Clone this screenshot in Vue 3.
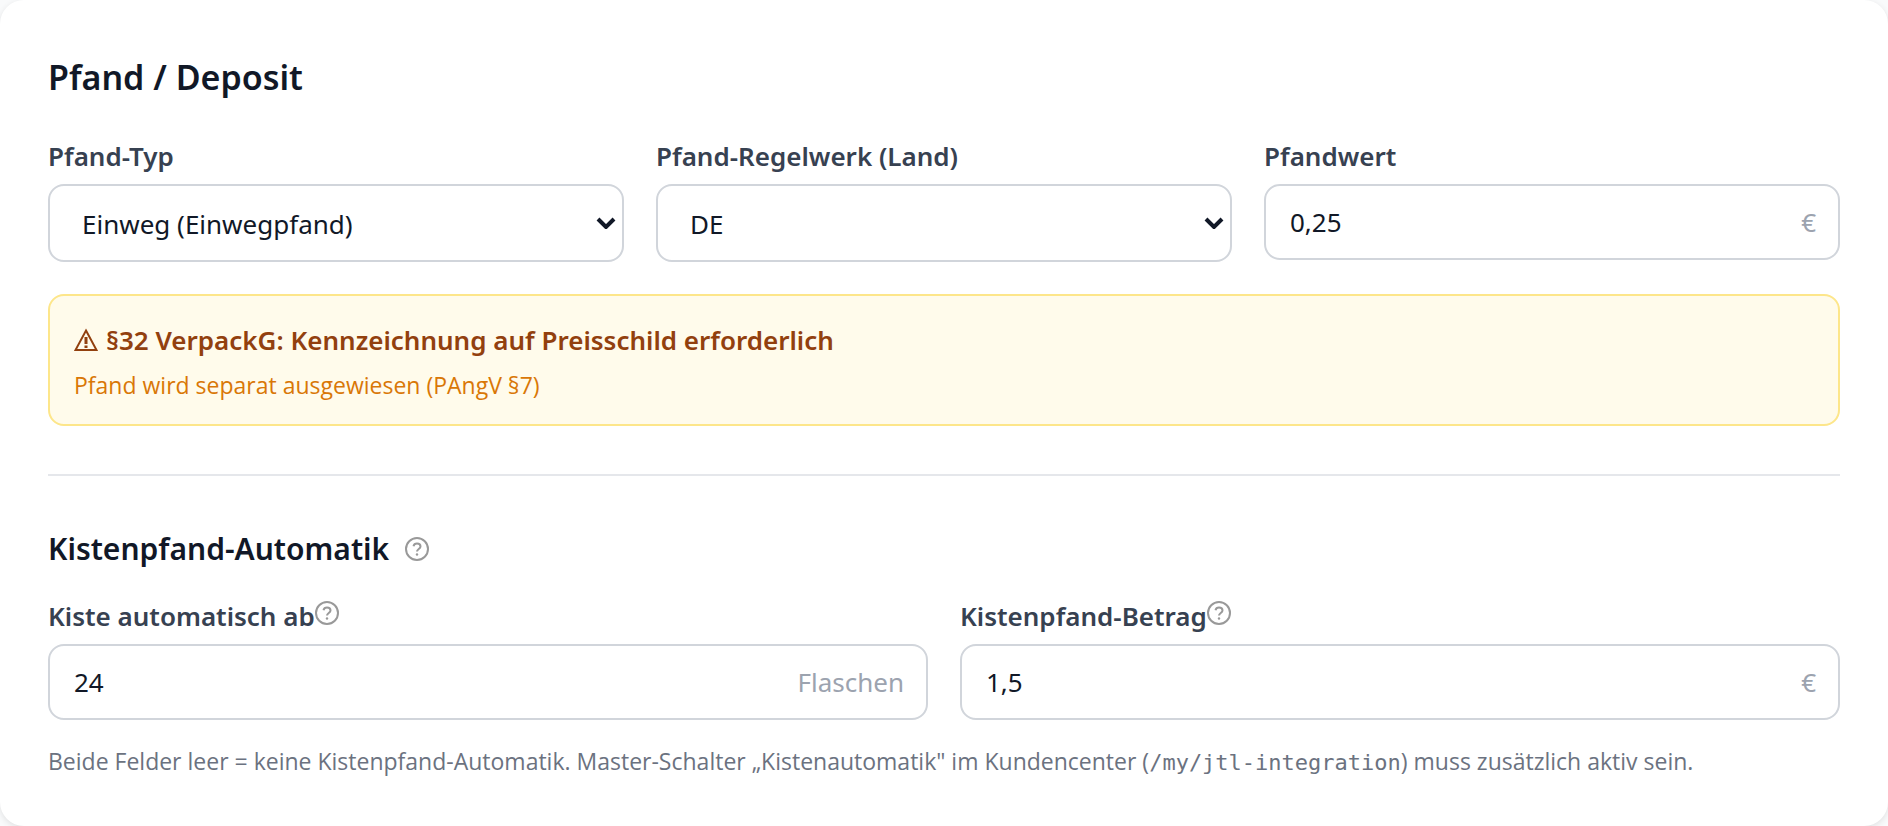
<template>
  <section class="card">
    <h2 class="title">Pfand / Deposit</h2>

    <div class="grid grid-3">
      <div class="field">
        <label for="pfand-typ">Pfand-Typ</label>
        <div class="control">
          <select id="pfand-typ" v-model="pfandTyp">
            <option v-for="typ in pfandTypen" :key="typ.value" :value="typ.value">{{ typ.label }}</option>
          </select>
          <svg class="chevron" viewBox="0 0 20 12" aria-hidden="true"><path d="M2 2l8 8 8-8" /></svg>
        </div>
      </div>
      <div class="field">
        <label for="regelwerk">Pfand-Regelwerk (Land)</label>
        <div class="control">
          <select id="regelwerk" v-model="land">
            <option v-for="code in laender" :key="code" :value="code">{{ code }}</option>
          </select>
          <svg class="chevron" viewBox="0 0 20 12" aria-hidden="true"><path d="M2 2l8 8 8-8" /></svg>
        </div>
      </div>
      <div class="field">
        <label for="pfandwert">Pfandwert</label>
        <div class="control">
          <input id="pfandwert" v-model="pfandwert" type="text" inputmode="decimal" />
          <span class="unit">€</span>
        </div>
      </div>
    </div>

    <div v-if="land === 'DE'" class="notice">
      <p class="notice-title">
        <svg class="warn" viewBox="0 0 24 24" aria-hidden="true">
          <path d="M12 2.500L22.500 22H1.500z" />
          <path class="mark" d="M12 9v7M12 17.500v2.500" />
        </svg>
        §32 VerpackG: Kennzeichnung auf Preisschild erforderlich
      </p>
      <p class="notice-text">Pfand wird separat ausgewiesen (PAngV §7)</p>
    </div>

    <div class="kiste">
      <div class="kiste-head">
        <h3>Kistenpfand-Automatik</h3>
        <button type="button" class="help" aria-label="Hilfe">
          <svg viewBox="0 0 24 24" aria-hidden="true">
            <circle cx="12" cy="12" r="11" />
            <path d="M8.500 9.200c.4-1.800 1.800-2.700 3.500-2.700 2 0 3.500 1.200 3.500 3 0 2.400-3.500 2.600-3.500 5" />
            <circle class="dot" cx="12" cy="17.500" r="1.200" />
          </svg>
        </button>
      </div>

      <div class="grid grid-2">
        <div v-for="f in kistenFelder" :key="f.id" class="field">
          <div class="label-row">
            <label :for="f.id">{{ f.label }}</label>
            <button type="button" class="help" aria-label="Hilfe">
              <svg viewBox="0 0 24 24" aria-hidden="true">
                <circle cx="12" cy="12" r="11" />
                <path d="M8.500 9.200c.4-1.800 1.800-2.700 3.500-2.700 2 0 3.500 1.200 3.500 3 0 2.400-3.500 2.600-3.500 5" />
                <circle class="dot" cx="12" cy="17.500" r="1.200" />
              </svg>
            </button>
          </div>
          <div class="control">
            <input :id="f.id" v-model="f.value" type="text" inputmode="decimal" />
            <span class="unit">{{ f.unit }}</span>
          </div>
        </div>
      </div>

      <p class="hint">
        Beide Felder leer = keine Kistenpfand-Automatik. Master-Schalter „Kistenautomatik" im Kundencenter
        (<code>/my/jtl-integration</code>) muss zusätzlich aktiv sein.
      </p>
    </div>
  </section>
</template>

<script setup>
import { reactive, ref } from "vue";

const pfandTypen = [
  { value: "einweg", label: "Einweg (Einwegpfand)" },
  { value: "mehrweg", label: "Mehrweg (Mehrwegpfand)" },
];
const laender = ["DE", "AT"];

const pfandTyp = ref("einweg");
const land = ref("DE");
const pfandwert = ref("0,25");

const kistenFelder = reactive([
  { id: "kiste-ab", label: "Kiste automatisch ab", value: "24", unit: "Flaschen" },
  { id: "kiste-betrag", label: "Kistenpfand-Betrag", value: "1,5", unit: "€" },
]);
</script>

<style>
body {
  background: #f9fafb;
}
</style>

<style scoped>
.card {
  box-sizing: border-box;
  min-height: 100vh;
  padding: 48px;
  background: #ffffff;
  border-radius: 24px;
  box-shadow: 0 2px 6px rgba(0, 0, 0, 0.1);
  color: #111827;
  font-family: "Segoe UI", "Noto Sans", sans-serif;
  font-size: 26px;
  line-height: 40px;
}

h2,
h3,
p {
  margin: 0;
}

.title {
  margin-bottom: 30px;
  font-size: 34px;
  font-weight: 600;
  line-height: 58px;
}

.grid {
  display: grid;
  gap: 32px;
  align-items: start;
}
.grid-3 {
  grid-template-columns: repeat(3, minmax(0, 1fr));
}
.grid-2 {
  grid-template-columns: repeat(2, minmax(0, 1fr));
}

label {
  display: block;
  color: #374151;
  font-weight: 600;
}
.label-row {
  display: flex;
  align-items: flex-start;
}

.control {
  position: relative;
  margin-top: 8px;
}

input,
select {
  display: block;
  box-sizing: border-box;
  width: 100%;
  height: 76px;
  padding: 0 24px;
  border: 2px solid #d1d5db;
  border-radius: 16px;
  background: #ffffff;
  color: #111827;
  font: inherit;
}
select {
  height: 78px;
  padding: 2px 40px 0 32px;
  appearance: none;
}

.chevron {
  position: absolute;
  top: 33px;
  right: 8px;
  width: 20px;
  height: 12px;
  fill: none;
  stroke: #111827;
  stroke-width: 4;
  pointer-events: none;
}
.unit {
  position: absolute;
  top: 18px;
  right: 24px;
  color: #9ca3af;
  pointer-events: none;
}

.notice {
  margin-top: 32px;
  padding: 24px 24px 22px;
  border: 2px solid #fde68a;
  border-radius: 16px;
  background: #fffbeb;
}
.notice-title {
  display: flex;
  align-items: center;
  gap: 8px;
  color: #92400e;
  font-weight: 600;
}
.warn {
  width: 24px;
  height: 24px;
  fill: none;
  stroke: currentColor;
  stroke-width: 2;
}
.warn .mark {
  stroke-width: 3;
}
.notice-text {
  margin-top: 8px;
  color: #d97706;
  font-family: "Segoe UI", "Open Sans", sans-serif;
  font-size: 23px;
  line-height: 34px;
}

.kiste {
  margin-top: 48px;
  padding-top: 48px;
  border-top: 2px solid #e5e7eb;
}
.kiste-head {
  display: flex;
  align-items: center;
  gap: 16px;
  margin-bottom: 22px;
}
h3 {
  font-size: 30px;
  font-weight: 600;
  line-height: 50px;
}

.help {
  display: flex;
  padding: 0;
  border: 0;
  background: none;
  color: #999999;
  cursor: pointer;
}
.label-row .help {
  margin-top: 5px;
}
.help svg {
  width: 24px;
  height: 24px;
  fill: none;
  stroke: currentColor;
  stroke-width: 2;
}
.help .dot {
  fill: currentColor;
  stroke: none;
}

.hint {
  margin-top: 24px;
  color: #6b7280;
  font-family: "Segoe UI", "Open Sans", sans-serif;
  font-size: 23px;
  line-height: 34px;
}
code {
  font-family: Consolas, "DejaVu Sans Mono", monospace;
  font-size: 22px;
  line-height: 1;
}
</style>
